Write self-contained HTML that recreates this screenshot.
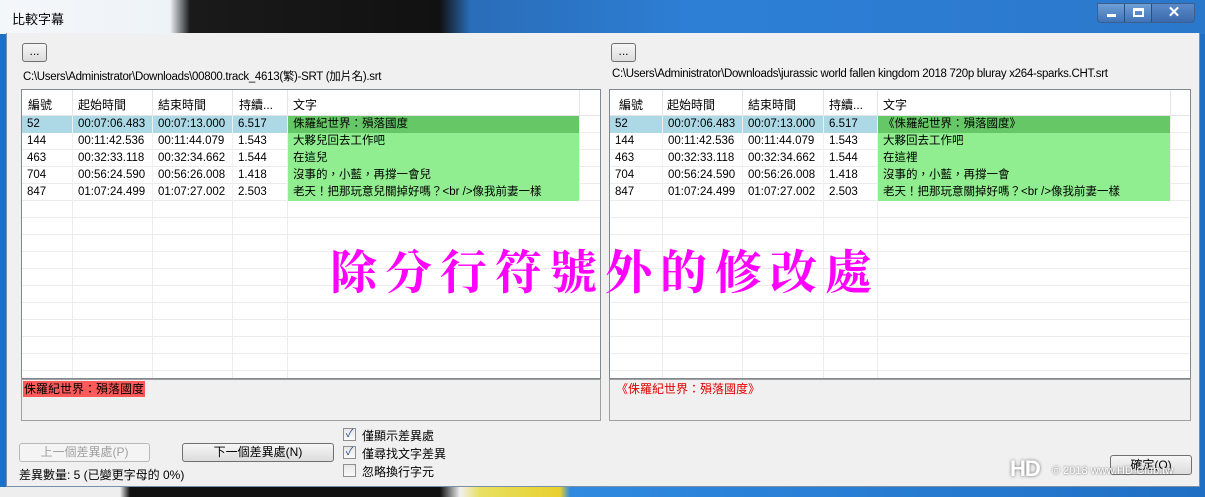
<!DOCTYPE html>
<html><head><meta charset="utf-8"><style>
*{margin:0;padding:0;box-sizing:border-box}
body{width:1205px;height:497px;overflow:hidden;position:relative;background:#1f6fc4;font-family:"Liberation Sans","Noto Sans CJK TC",sans-serif;font-size:12px;color:#000}
.a{position:absolute}
.tb{left:0;top:0;width:1205px;height:34px;background:linear-gradient(90deg,#f4f7fa 0,#eef3f8 170px,#1a1a1a 190px,#111 440px,#2a6db8 470px,#2d7fd6 700px,#2a78cc 1205px)}
.win{left:6px;top:33px;width:1194px;height:454px;background:#f0f0f0;border:1px solid #7a8fa8;border-top:none}
.btn{background:linear-gradient(#f6f6f6,#dcdcdc);border:1px solid #707070;border-radius:3px;text-align:center}
.list{background:#fff;border:1px solid #828790;font-size:11.5px}
.hd{height:26px;border-bottom:1px solid #e5e5e5;font-size:12px}
.cell{position:absolute;top:0;height:17px;padding-left:5px;border-right:1px solid #f0f0f0}
.g{background:#90ee90}
.gs{background:#66c766}
.sel{background:#add8e6}
.hline{position:absolute;height:1px;background:#ececec}
.cb{width:13px;height:13px;border:1px solid #8f8f8f;background:linear-gradient(#e8e8e8,#fafafa)}
</style></head><body>
<div class="a tb"></div>
<div class="a" style="left:12px;top:9px;font-size:13px;color:#000">比較字幕</div>
<div class="a" style="left:1097px;top:3px;width:98px;height:20px;border:1px solid #3c5f8c;border-radius:0 0 4px 4px;background:linear-gradient(#6f9fd6,#3f73b8);overflow:hidden">
 <div class="a" style="left:0;top:0;width:27px;height:18px;border-right:1px solid #2d4e78"><div class="a" style="left:9px;top:10px;width:9px;height:3px;background:#fff"></div></div>
 <div class="a" style="left:27px;top:0;width:27px;height:18px;border-right:1px solid #2d4e78"><div class="a" style="left:8px;top:4px;width:11px;height:9px;border:2px solid #fff;border-top-width:3px"></div></div>
 <div class="a" style="left:54px;top:-1px;width:44px;height:19px;background:linear-gradient(#5d8ccb,#3a6aab);color:#fff;font-weight:bold;font-size:15px;text-align:center">✕</div>
</div>
<div class="a win"></div>

<div class="a btn" style="left:22px;top:43px;width:25px;height:19px;line-height:14px">...</div>
<div class="a" style="left:23px;top:68px;font-size:11.5px;letter-spacing:-0.3px">C:\Users\Administrator\Downloads\00800.track_4613(繁)-SRT (加片名).srt</div>
<div class="a list" style="left:21px;top:89px;width:580px;height:290px;overflow:hidden" id="L">
 <div class="a hd" style="left:0;top:0;width:580px;background:#fff">
  <span class="a" style="left:6px;top:6px">編號</span><span class="a" style="left:56px;top:6px">起始時間</span><span class="a" style="left:136px;top:6px">結束時間</span><span class="a" style="left:217px;top:6px">持續...</span><span class="a" style="left:271px;top:6px">文字</span>
  <div class="a" style="left:50px;top:0;width:1px;height:26px;background:#e5e5e5"></div><div class="a" style="left:130px;top:0;width:1px;height:26px;background:#e5e5e5"></div><div class="a" style="left:210px;top:0;width:1px;height:26px;background:#e5e5e5"></div><div class="a" style="left:265px;top:0;width:1px;height:26px;background:#e5e5e5"></div><div class="a" style="left:557px;top:0;width:1px;height:26px;background:#e5e5e5"></div>
 </div>
</div>

<div class="a btn" style="left:611px;top:43px;width:25px;height:19px;line-height:14px">...</div>
<div class="a" style="left:612px;top:68px;font-size:11.5px;letter-spacing:-0.3px">C:\Users\Administrator\Downloads\jurassic world fallen kingdom 2018 720p bluray x264-sparks.CHT.srt</div>
<div class="a list" style="left:609px;top:89px;width:582px;height:290px;overflow:hidden" id="R">
 <div class="a hd" style="left:0;top:0;width:582px;background:#fff">
  <span class="a" style="left:9px;top:6px">編號</span><span class="a" style="left:57px;top:6px">起始時間</span><span class="a" style="left:138px;top:6px">結束時間</span><span class="a" style="left:219px;top:6px">持續...</span><span class="a" style="left:273px;top:6px">文字</span>
  <div class="a" style="left:52px;top:0;width:1px;height:26px;background:#e5e5e5"></div><div class="a" style="left:132px;top:0;width:1px;height:26px;background:#e5e5e5"></div><div class="a" style="left:213px;top:0;width:1px;height:26px;background:#e5e5e5"></div><div class="a" style="left:267px;top:0;width:1px;height:26px;background:#e5e5e5"></div><div class="a" style="left:560px;top:0;width:1px;height:26px;background:#e5e5e5"></div>
 </div>
</div>

<div class="a" style="left:330px;top:236px;font-family:'Liberation Serif','Noto Serif CJK TC','Noto Serif CJK SC',serif;font-size:47px;font-weight:bold;color:#ff00ff;letter-spacing:8px;white-space:nowrap">除分行符號外的修改處</div>

<div class="a" style="left:21px;top:379px;width:580px;height:42px;border:1px solid #a0a0a0;background:#f0f0f0"></div>
<div class="a" style="left:23px;top:381px;height:16px;line-height:16px;background:#ff5a5a;padding:0 1px">侏羅紀世界：殞落國度</div>
<div class="a" style="left:609px;top:379px;width:582px;height:42px;border:1px solid #a0a0a0;background:#f0f0f0"></div>
<div class="a" style="left:616px;top:381px;height:16px;line-height:16px;color:#e00000">《侏羅紀世界：殞落國度》</div>

<div class="a btn" style="left:19px;top:443px;width:131px;height:19px;line-height:17px;color:#a0a0a0;border-color:#b8b8b8;background:#f4f4f4">上一個差異處(P)</div>
<div class="a btn" style="left:182px;top:443px;width:152px;height:19px;line-height:17px">下一個差異處(N)</div>
<div class="a cb" style="left:343px;top:428px;color:#2a4f8a;font-size:11px;line-height:11px;text-align:center">✓</div>
<div class="a" style="left:362px;top:427px">僅顯示差異處</div>
<div class="a cb" style="left:343px;top:446px;color:#2a4f8a;font-size:11px;line-height:11px;text-align:center">✓</div>
<div class="a" style="left:362px;top:445px">僅尋找文字差異</div>
<div class="a cb" style="left:343px;top:464px"></div>
<div class="a" style="left:362px;top:463px">忽略換行字元</div>
<div class="a" style="left:19px;top:466px">差異數量: 5 (已變更字母的 0%)</div>
<div class="a btn" style="left:1110px;top:455px;width:82px;height:20px;line-height:18px">確定(O)</div>
<div class="a" style="left:1010px;top:456px;color:#fff;font-size:22px;font-weight:bold;text-shadow:0 0 3px #666;letter-spacing:-1px">HD</div>
<div class="a" style="left:1052px;top:465px;color:#fff;font-size:11px;text-shadow:0 0 2px #555">© 2018 www.HD-Club.tw</div>

<div class="a" style="left:0;top:487px;width:1205px;height:10px;background:linear-gradient(90deg,#eee 0,#eee 120px,#111 130px,#111 440px,#f0f0f0 460px,#e8e060 480px,#e8d030 560px,#2f8ae0 570px,#1f6fc4 1205px)"></div>

<script>
const data=[["52","00:07:06.483","00:07:13.000","6.517","侏羅紀世界：殞落國度","《侏羅紀世界：殞落國度》"],
["144","00:11:42.536","00:11:44.079","1.543","大夥兒回去工作吧","大夥回去工作吧"],
["463","00:32:33.118","00:32:34.662","1.544","在這兒","在這裡"],
["704","00:56:24.590","00:56:26.008","1.418","沒事的，小藍，再撐一會兒","沒事的，小藍，再撐一會"],
["847","01:07:24.499","01:07:27.002","2.503","老天！把那玩意兒關掉好嗎？&lt;br /&gt;像我前妻一樣","老天！把那玩意關掉好嗎？&lt;br /&gt;像我前妻一樣"]];
function build(id,cols,w,ti){
 const el=document.getElementById(id);let h='';
 for(let r=0;r<16;r++){
  const y=26+r*17;
  h+=`<div class="hline" style="left:0;top:${y+16}px;width:${w}px"></div>`;
  if(r<5){const d=data[r];
   for(let c=0;c<5;c++){const x=cols[c],wd=cols[c+1]-cols[c];
    let cls=c==4?(r==0?'gs':'g'):(r==0?'sel':'');
    h+=`<div class="cell ${cls}" style="left:${x}px;top:${y}px;width:${wd}px;line-height:17px;white-space:nowrap;overflow:hidden">${c==4?d[ti]:d[c]}</div>`;}
  } else {for(let c=1;c<5;c++)h+=`<div class="a" style="left:${cols[c]-1}px;top:${y}px;width:1px;height:17px;background:#ececec"></div>`;}
 }
 el.insertAdjacentHTML('beforeend',h);
}
build('L',[0,51,131,211,266,558],580,4);
build('R',[0,53,133,214,268,561],582,5);
</script>
</body></html>
